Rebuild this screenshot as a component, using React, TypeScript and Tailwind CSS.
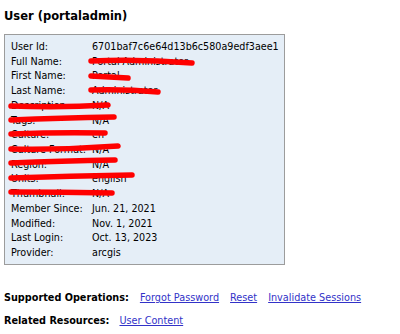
import React from "react";

const rows: [string, string][] = [
  ["User Id:", "6701baf7c6e64d13b6c580a9edf3aee1"],
  ["Full Name:", "Portal Administrator"],
  ["First Name:", "Portal"],
  ["Last Name:", "Administrator"],
  ["Description:", "N/A"],
  ["Tags:", "N/A"],
  ["Culture:", "en"],
  ["Culture Format:", "N/A"],
  ["Region:", "N/A"],
  ["Units:", "english"],
  ["Thumbnail:", "N/A"],
  ["Member Since:", "Jun. 21, 2021"],
  ["Modified:", "Nov. 1, 2021"],
  ["Last Login:", "Oct. 13, 2023"],
  ["Provider:", "arcgis"],
];

export default function App() {
  return (
    <div className="relative w-[400px] h-[334px] bg-white text-black font-['DejaVu_Sans',Verdana,sans-serif] overflow-hidden">
      <h2 className="pl-[4px] pt-[9px] text-[11.5px] font-bold leading-[14px]">User (portaladmin)</h2>
      <div className="ml-[4px] mt-[11px] w-[281px] h-[231px] border border-[#9c9c9c] bg-[#e5eef7] pl-[6px] pt-[5px]">
        {rows.map(([k, v], i) => (
          <div key={k} className={`grid grid-cols-[81px_1fr] text-[9.6px] ${i < 11 ? "leading-[14.7px]" : "leading-[14.8px]"}`}>
            <span>{k}</span>
            <span>{v}</span>
          </div>
        ))}
      </div>
      <div className="pl-[4px] mt-[26px] flex items-center text-[9.7px] leading-[14px]">
        <span className="font-bold">Supported Operations:</span>
        <a className="ml-[11px] text-[#3232c8] underline">Forgot Password</a>
        <a className="ml-[11px] text-[#3232c8] underline">Reset</a>
        <a className="ml-[11px] text-[#3232c8] underline">Invalidate Sessions</a>
      </div>
      <div className="pl-[4px] mt-[9px] flex items-center text-[9.7px] leading-[14px]">
        <span className="font-bold">Related Resources:</span>
        <a className="ml-[10px] text-[#3232c8] underline">User Content</a>
      </div>
      <svg className="absolute left-0 top-0" width="400" height="334" viewBox="0 0 400 334">
        <g fill="none" stroke="#ff0000" strokeWidth="5.5" strokeLinecap="round">
          <path d="M91 61 Q140 59 192 63" />
          <path d="M91 76 Q110 77 128 78" />
          <path d="M91 90 Q125 89 158 92" />
          <path d="M11 106 Q60 108 108 105" />
          <path d="M11 120 Q60 118 114 117" />
          <path d="M11 134 Q60 132 105 133" />
          <path d="M11 149 Q65 150 118 146" />
          <path d="M11 163 Q60 161 115 160" />
          <path d="M11 178 Q70 176 132 175" />
          <path d="M11 192 Q60 192 112 193" />
        </g>
      </svg>
    </div>
  );
}
